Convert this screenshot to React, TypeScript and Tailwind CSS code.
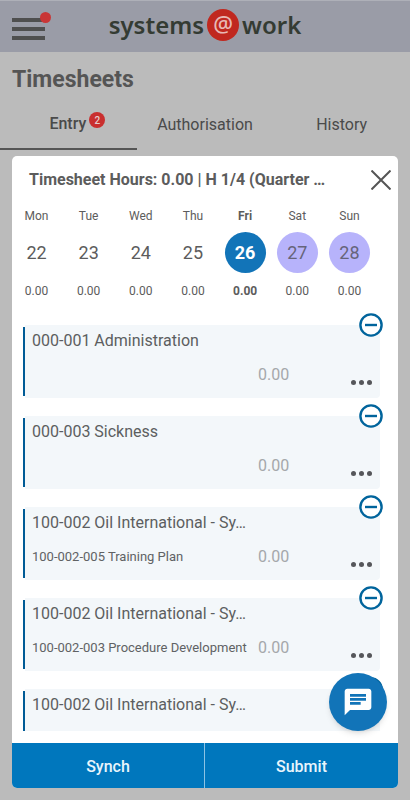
import React, { useState } from 'react';

interface Day {
    name: string;
    date: number;
    hours: string;
    weekend?: boolean;
}

interface Entry {
    id: number;
    title: string;
    task?: string;
}

const days: Day[] = [
    { name: 'Mon', date: 22, hours: '0.00' },
    { name: 'Tue', date: 23, hours: '0.00' },
    { name: 'Wed', date: 24, hours: '0.00' },
    { name: 'Thu', date: 25, hours: '0.00' },
    { name: 'Fri', date: 26, hours: '0.00' },
    { name: 'Sat', date: 27, hours: '0.00', weekend: true },
    { name: 'Sun', date: 28, hours: '0.00', weekend: true },
];

const entries: Entry[] = [
    { id: 1, title: '000-001 Administration' },
    { id: 2, title: '000-003 Sickness' },
    { id: 3, title: '100-002 Oil International - Sy…', task: '100-002-005 Training Plan' },
    { id: 4, title: '100-002 Oil International - Sy…', task: '100-002-003 Procedure Development' },
    { id: 5, title: '100-002 Oil International - Sy…' },
];

const Header: React.FC = () => (
    <header className="grid h-[52px] shrink-0 grid-cols-[1fr_auto_1fr] items-center border-t border-[#aeb0b8] bg-[#9a9ca7] px-3">
        <button type="button" aria-label="Menu" className="relative mt-1 flex w-[33px] flex-col gap-[5px]">
            <span className="h-1 bg-[#4f4f4f]" />
            <span className="h-1 bg-[#4f4f4f]" />
            <span className="h-1 bg-[#4f4f4f]" />
            <span className="absolute -top-[6px] -right-[6px] size-[11px] rounded-full bg-[#c93636]" />
        </button>
        <div className="flex items-center gap-[3px] pb-[3px] font-['Noto_Sans',sans-serif] text-2xl leading-8 font-semibold text-[#343b33]">
            <span>systems</span>
            <span className="flex size-8 items-center justify-center rounded-full bg-[#c0281f] pb-1 text-[22px] font-medium text-[#e8b9b5]">@</span>
            <span>work</span>
        </div>
    </header>
);

const Tabs: React.FC = () => (
    <nav className="grid h-[50px] shrink-0 grid-cols-3 text-base text-[#4a4a4a]">
        <a href="#entry" className="flex items-center justify-center gap-[3px] border-b-2 border-[#555] pl-[18px] font-medium">
            Entry
            <span className="mb-2 flex size-4 items-center justify-center rounded-full bg-[#c92f2f] text-[10px] text-[#e6cccc]">2</span>
        </a>
        <a href="#authorisation" className="flex items-center justify-center">Authorisation</a>
        <a href="#history" className="flex items-center justify-center">History</a>
    </nav>
);

const EntryCard: React.FC<{ entry: Entry }> = ({ entry }) => {
    const [hours, setHours] = useState('');

    return (
        <li className="relative flex h-[73px] shrink-0">
            <span className="my-[2px] w-[2px] shrink-0 bg-[#005b96]" />
            <div className="flex min-w-0 flex-1 flex-col rounded-r-[4px] bg-[#f3f7fa] pt-1 pr-2 pl-[7px]">
                <h3 className="text-base leading-6 text-[#5c5e60]">{entry.title}</h3>
                <div className="flex items-center pt-[10px]">
                    <p className="flex-1 text-[13px] leading-5 whitespace-nowrap text-[#606264]">{entry.task}</p>
                    <input
                        type="text"
                        aria-label={`Hours for ${entry.title}`}
                        placeholder="0.00"
                        value={hours}
                        onChange={(e) => setHours(e.target.value)}
                        className="h-6 w-[93px] bg-transparent text-base text-[#606264] placeholder-[#a5a8ab] focus:outline-none"
                    />
                    <button type="button" aria-label="More" className="mt-[14px] flex gap-[3px]">
                        <span className="size-[5px] rounded-full bg-[#55565a]" />
                        <span className="size-[5px] rounded-full bg-[#55565a]" />
                        <span className="size-[5px] rounded-full bg-[#55565a]" />
                    </button>
                </div>
            </div>
            <button type="button" aria-label="Remove" className="absolute -top-3 -right-[3px]">
                <svg width="24" height="24" viewBox="0 0 24 24" fill="#fff" stroke="#00649c" strokeWidth="2.4">
                    <circle cx="12" cy="12" r="10.6" />
                    <path d="M6 12h12" />
                </svg>
            </button>
        </li>
    );
};

const App: React.FC = () => {
    const [selected, setSelected] = useState(26);

    return (
        <div className="flex h-screen flex-col bg-[#bbbbbb] pb-3 font-[Roboto,sans-serif]">
            <Header />
            <h1 className="shrink-0 px-3 pt-3 pb-1 text-[23px] leading-8 font-bold text-[#555]">Timesheets</h1>
            <Tabs />

            <main className="relative mx-3 mt-[6px] flex min-h-0 flex-1 flex-col overflow-hidden rounded-[5px] bg-white text-[#5c5c5c]">
                <div className="flex h-12 shrink-0 items-center justify-between pr-[7px] pl-[17px]">
                    <h2 className="text-base font-bold">Timesheet Hours: 0.00 | H 1/4 (Quarter …</h2>
                    <button type="button" aria-label="Close">
                        <svg width="20" height="20" viewBox="0 0 20 20" stroke="#555" strokeWidth="2">
                            <path d="M0.5 0.5l19 19M19.5 0.5l-19 19" />
                        </svg>
                    </button>
                </div>

                <div className="flex shrink-0 justify-between pr-7 pl-1">
                    {days.map((day) => (
                        <button
                            key={day.date}
                            type="button"
                            onClick={() => setSelected(day.date)}
                            className={`flex w-[41px] flex-col items-center text-xs ${day.date === selected ? 'font-bold' : ''}`}
                        >
                            <span className="h-7 pt-1">{day.name}</span>
                            <span
                                className={`flex size-[41px] items-center justify-center rounded-full text-lg ${
                                    day.date === selected ? 'bg-[#1274b8] text-white' : day.weekend ? 'bg-[#b7b3fb] text-[#66647a]' : ''
                                }`}
                            >
                                {day.date}
                            </span>
                            <span className="pt-[10px]">{day.hours}</span>
                        </button>
                    ))}
                </div>

                <ul className="mb-3 flex min-h-0 flex-1 flex-col gap-[18px] overflow-hidden pt-[26px] pr-[18px] pl-[11px]">
                    {entries.map((entry) => (
                        <EntryCard key={entry.id} entry={entry} />
                    ))}
                </ul>

                <button
                    type="button"
                    aria-label="Chat"
                    className="absolute right-[11px] bottom-[57px] flex size-[58px] items-center justify-center rounded-full bg-[#1274b8] shadow-md"
                >
                    <svg width="32" height="32" viewBox="0 0 24 24" fill="#fff">
                        <path d="M20 2H4c-1.1 0-1.99.9-1.99 2L2 22l4-4h14c1.1 0 2-.9 2-2V4c0-1.1-.9-2-2-2zM6 9h12v2H6V9zm8 5H6v-2h8v2zm4-6H6V6h12v2z" />
                    </svg>
                </button>

                <footer className="grid h-[45px] shrink-0 grid-cols-2 bg-[#0077bd] text-base font-medium text-[#e9f5fc]">
                    <button type="button" className="border-r border-[#8cc3e4] pt-[2px]">Synch</button>
                    <button type="button" className="pt-[2px]">Submit</button>
                </footer>
            </main>
        </div>
    );
};

export default App;
